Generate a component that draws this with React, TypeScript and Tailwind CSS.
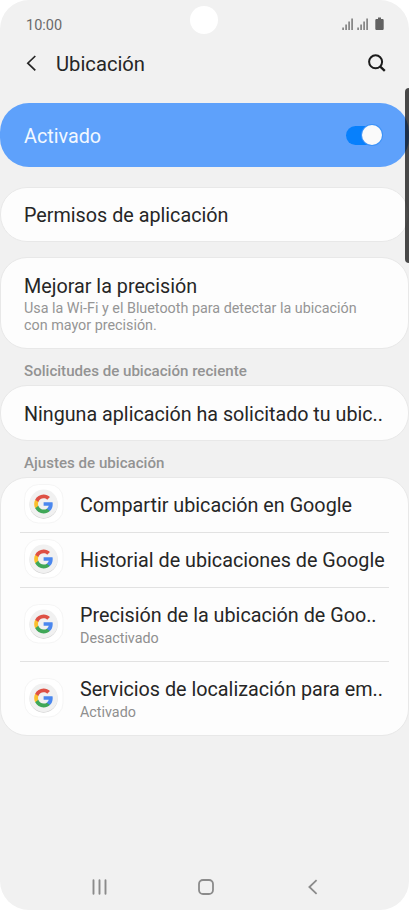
import React from "react";
import clsx from "clsx";

interface ServiceItem {
  title: string;
  status?: string;
  className: string;
}

const services: ServiceItem[] = [
  { title: "Compartir ubicación en Google", className: "h-[54px]" },
  { title: "Historial de ubicaciones de Google", className: "h-[55px]" },
  {
    title: "Precisión de la ubicación de Goo..",
    status: "Desactivado",
    className: "h-[74px]",
  },
  {
    title: "Servicios de localización para em..",
    status: "Activado",
    className: "h-[74px]",
  },
];

function GoogleIcon() {
  return (
    <svg className="mb-[2px] size-[40px] shrink-0" viewBox="0 0 40 40" fill="none">
      <rect x="0.5" y="0.5" width="38.5" height="38.5" rx="14" fill="#fff" stroke="#f5f5f5" />
      <circle cx="19.6" cy="20.7" r="14" fill="#d2d2d2" />
      <circle cx="19.6" cy="19.8" r="14.2" fill="#f1f1f1" />
      <g transform="translate(9.3 9.6) scale(0.86)">
        <path
          fill="#4a87ee"
          d="M22.56 12.25c0-.78-.07-1.53-.2-2.25H12v4.26h5.92c-.26 1.37-1.04 2.53-2.21 3.31v2.77h3.57c2.08-1.92 3.28-4.74 3.28-8.09z"
        />
        <path
          fill="#3fa757"
          d="M12 23c2.97 0 5.46-.98 7.28-2.66l-3.57-2.77c-.98.66-2.23 1.06-3.71 1.06-2.86 0-5.29-1.93-6.16-4.53H2.18v2.84C3.99 20.53 7.7 23 12 23z"
        />
        <path
          fill="#fbc02d"
          d="M5.84 14.09c-.22-.66-.35-1.36-.35-2.09s.13-1.43.35-2.09V7.07H2.18C1.43 8.55 1 10.22 1 12s.43 3.45 1.18 4.93l3.66-2.84z"
        />
        <path
          fill="#de5044"
          d="M12 5.38c1.62 0 3.06.56 4.21 1.64l3.15-3.15C17.45 2.09 14.97 1 12 1 7.7 1 3.99 3.47 2.18 7.07l3.66 2.84c.87-2.6 3.3-4.53 6.16-4.53z"
        />
      </g>
    </svg>
  );
}

function StatusIcons() {
  return (
    <svg className="mb-[2px] h-4 w-11" viewBox="0 0 44 16">
      <g fill="#7d7d7d">
        <rect x="0.3" y="11.5" width="1.6" height="2.5" />
        <rect x="3.3" y="8.5" width="1.6" height="5.5" />
        <rect x="6.3" y="5.5" width="1.6" height="8.5" />
        <rect x="9.3" y="2.5" width="1.6" height="11.5" />
        <rect x="15.3" y="11.5" width="1.6" height="2.5" />
        <rect x="18.3" y="8.5" width="1.6" height="5.5" />
        <rect x="21.3" y="5.5" width="1.6" height="8.5" />
        <rect x="24.3" y="2.5" width="1.6" height="11.5" />
      </g>
      <path
        fill="#616161"
        d="M36 1.6h3v1.4h1.5q1.2 0 1.2 1.2v8.6q0 1.2-1.2 1.2h-6q-1.2 0-1.2-1.2V4.2q0-1.2 1.2-1.2H36z"
      />
    </svg>
  );
}

function Card({ className, children }: { className?: string; children: React.ReactNode }) {
  return (
    <section className={clsx("rounded-[27px] border border-[#e8e8e8] bg-[#fdfdfd]", className)}>
      {children}
    </section>
  );
}

export default function App() {
  return (
    <div className="h-[910px] w-[409px] bg-white font-['Roboto','Noto_Sans',sans-serif] text-[#262626]">
      <div className="relative flex h-full flex-col overflow-hidden rounded-[29px] bg-[#f1f1f1]">
        <div className="absolute top-[6px] left-[190px] size-[28px] rounded-full bg-white" />

        <div className="flex h-[48px] shrink-0 items-center justify-between pt-[2px] pr-[23px] pl-[26px] text-[#6a6a6a]">
          <span className="pt-px text-[14.5px]">10:00</span>
          <StatusIcons />
        </div>

        <header className="flex h-[55px] shrink-0 items-start pr-[23px] pl-[26px]">
          <svg className="mt-[7px] h-4 w-[11px]" viewBox="0 0 11 16" fill="none" stroke="#262626" strokeWidth="1.7">
            <path d="M9.3 1L1.8 8.2l7.5 7.2" />
          </svg>
          <h1 className="ml-[19px] text-[20.2px] leading-8">Ubicación</h1>
          <svg className="mt-[6px] ml-auto size-[18px]" viewBox="0 0 18 18" fill="none" stroke="#1c1c1c">
            <circle cx="7.6" cy="7.8" r="6.5" strokeWidth="2" />
            <path d="M12 12.3l4.8 4.6" strokeWidth="2.3" />
          </svg>
        </header>

        <main className="flex flex-col">
          <section className="flex h-[64px] items-center justify-between rounded-[29px] bg-[#5ea1fb] pr-[27px] pl-[24px]">
            <span className="pt-[3px] text-[19.75px] text-[#f2f8ff]">Activado</span>
            <span className="flex h-[19px] w-[36px] items-center justify-end rounded-full bg-[#0780fc]">
              <span className="size-[20px] shrink-0 rounded-full bg-[#fafafa] ring-1 ring-[#3c92f8]" />
            </span>
          </section>

          <Card className="mt-[20px] flex h-[55px] items-center px-[23px] pt-[2px]">
            <span className="text-[19.75px]">Permisos de aplicación</span>
          </Card>

          <Card className="mt-[15px] h-[92px] px-[23px] pt-[16px]">
            <h2 className="text-[19.75px] leading-[26px]">Mejorar la precisión</h2>
            <p className="text-[14.33px] leading-[17px] text-[#959595]">
              Usa la Wi-Fi y el Bluetooth para detectar la ubicación
              <br />
              con mayor precisión.
            </p>
          </Card>

          <h3 className="flex h-[36px] items-center pt-[9px] pl-[24px] text-[15.1px] font-medium text-[#939393]">
            Solicitudes de ubicación reciente
          </h3>
          <Card className="flex h-[56px] items-center px-[23px] pt-[3px]">
            <span className="whitespace-nowrap text-[19.7px]">
              Ninguna aplicación ha solicitado tu ubic..
            </span>
          </Card>

          <h3 className="flex h-[36px] items-center pt-[9px] pl-[24px] text-[15.1px] font-medium text-[#939393]">
            Ajustes de ubicación
          </h3>
          <Card className="h-[259px] px-[19px]">
            {services.map((item, i) => (
              <div
                key={item.title}
                className={clsx(
                  "flex items-center pl-[4px]",
                  i > 0 && "border-t border-[#e2e2e2]",
                  item.className
                )}
              >
                <GoogleIcon />
                <div className="ml-[16px] pt-[2px] whitespace-nowrap">
                  <div className="text-[19.75px] leading-[26px]">{item.title}</div>
                  {item.status && (
                    <div className="mb-[2px] text-[14.33px] leading-[18px] text-[#8f8f8f]">
                      {item.status}
                    </div>
                  )}
                </div>
              </div>
            ))}
          </Card>
        </main>

        <nav className="mt-auto flex h-[46px] shrink-0 items-center pl-[92px]">
          <svg className="h-4 w-[15px]" viewBox="0 0 15 16" stroke="#8b8b8b" strokeWidth="1.9" strokeLinecap="round">
            <path d="M1.5 1.3v13.4M7.5 1.3v13.4M13.5 1.3v13.4" />
          </svg>
          <svg className="ml-[91px] size-4" viewBox="0 0 16 16" fill="none" stroke="#8b8b8b" strokeWidth="1.8">
            <rect x="1" y="1" width="14" height="14" rx="4" />
          </svg>
          <svg className="ml-[94px] h-4 w-[10px]" viewBox="0 0 10 16" fill="none" stroke="#8b8b8b" strokeWidth="1.8">
            <path d="M8.6 1.2L1.4 8l7.2 6.8" />
          </svg>
        </nav>

        {/* edge panel handle */}
        <div className="absolute top-[88px] -right-[4px] h-[175px] w-[8px] rounded-[4px] bg-black/70" />
      </div>
    </div>
  );
}
